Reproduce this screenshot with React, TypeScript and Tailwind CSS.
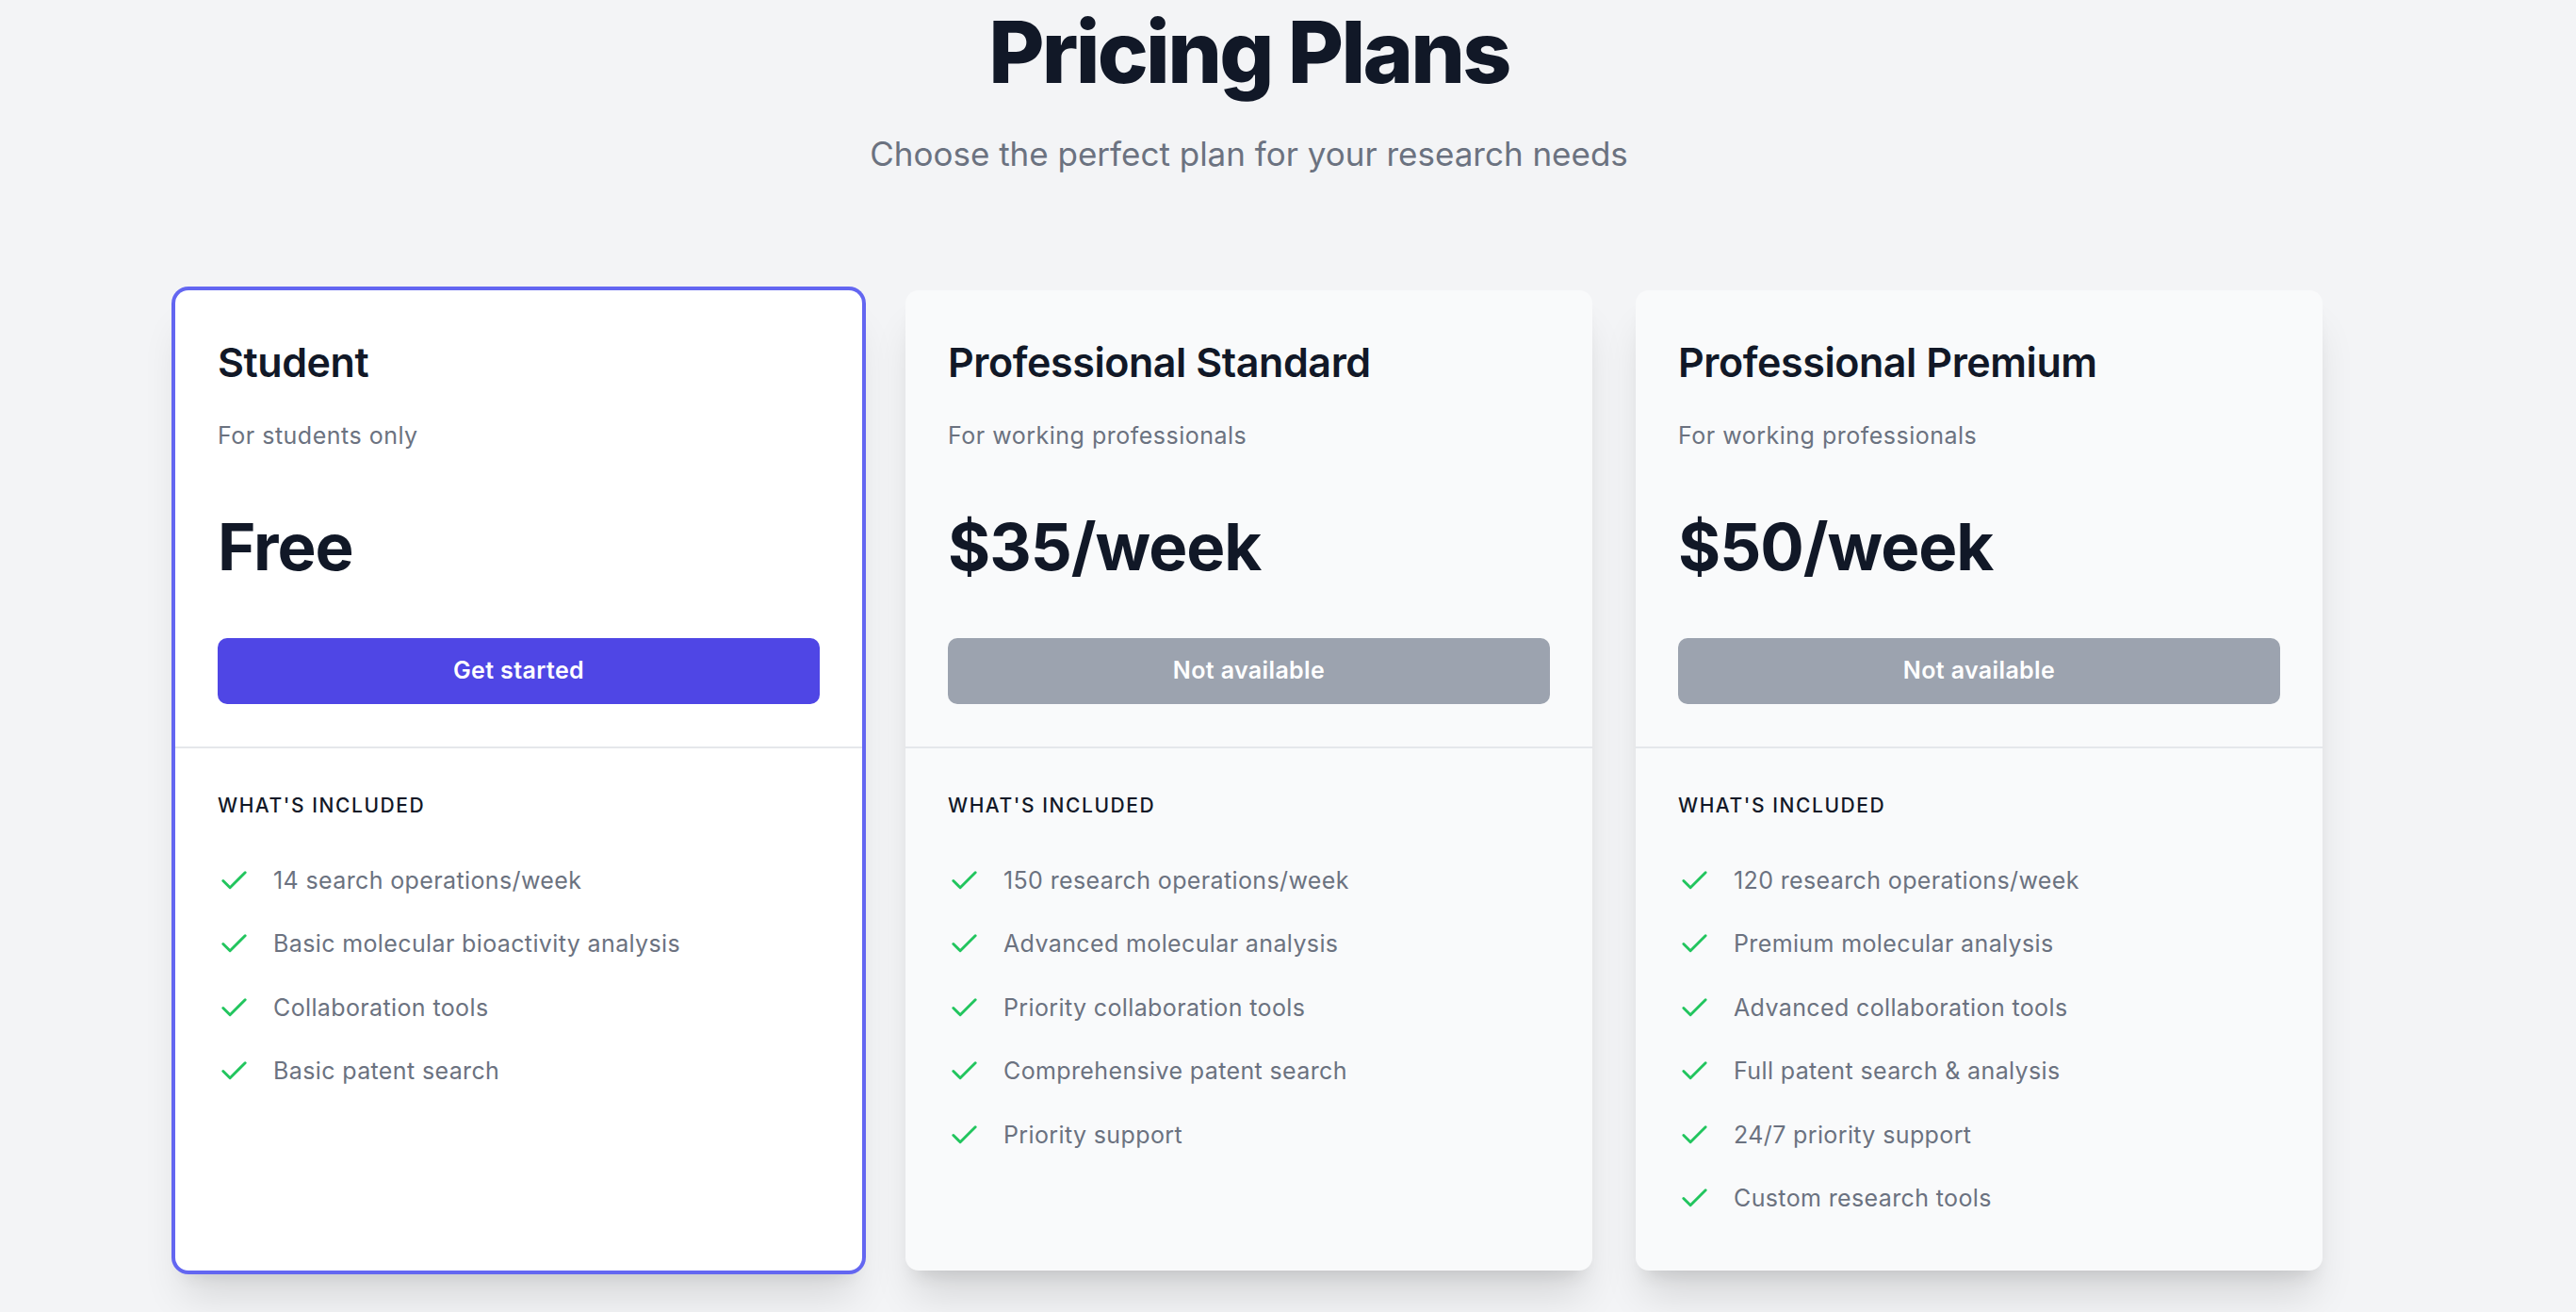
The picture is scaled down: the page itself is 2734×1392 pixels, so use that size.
import React from "react";
import { Check } from "lucide-react";

type Plan = {
  name: string;
  desc: string;
  price: string;
  cta: string;
  active: boolean;
  features: string[];
};

const plans: Plan[] = [
  {
    name: "Student",
    desc: "For students only",
    price: "Free",
    cta: "Get started",
    active: true,
    features: [
      "14 search operations/week",
      "Basic molecular bioactivity analysis",
      "Collaboration tools",
      "Basic patent search",
    ],
  },
  {
    name: "Professional Standard",
    desc: "For working professionals",
    price: "$35/week",
    cta: "Not available",
    active: false,
    features: [
      "150 research operations/week",
      "Advanced molecular analysis",
      "Priority collaboration tools",
      "Comprehensive patent search",
      "Priority support",
    ],
  },
  {
    name: "Professional Premium",
    desc: "For working professionals",
    price: "$50/week",
    cta: "Not available",
    active: false,
    features: [
      "120 research operations/week",
      "Premium molecular analysis",
      "Advanced collaboration tools",
      "Full patent search & analysis",
      "24/7 priority support",
      "Custom research tools",
    ],
  },
];

function Card({ plan }: { plan: Plan }) {
  return (
    <div
      className={
        plan.active
          ? "flex-1 flex flex-col rounded-[14px] bg-white ring-4 ring-[#6366f1] shadow-[0_35px_44px_-9px_rgba(0,0,0,0.12),0_14px_18px_-10px_rgba(0,0,0,0.1)]"
          : "flex-1 flex flex-col rounded-[14px] bg-[#f9fafb] shadow-[0_35px_44px_-9px_rgba(0,0,0,0.12),0_14px_18px_-10px_rgba(0,0,0,0.1)]"
      }
    >
      <div className="px-[45px] pt-[55px] pb-[45px]">
        <h3 className="text-[43px] leading-none font-semibold text-[#111827] tracking-[-0.01em]">{plan.name}</h3>
        <p className="mt-[44px] text-[25px] leading-none tracking-[0.02em] text-[#6b7280]">{plan.desc}</p>
        <p className="mt-[71px] text-[69px] leading-none font-bold text-[#111827] tracking-[-0.015em]">{plan.price}</p>
        <button
          className={
            plan.active
              ? "mt-[62px] h-[70px] w-full rounded-[10px] bg-[#4f46e5] text-[25px] font-semibold tracking-[0.015em] text-white"
              : "mt-[62px] h-[70px] w-full rounded-[10px] bg-[#9ca3af] text-[25px] font-semibold tracking-[0.015em] text-white"
          }
        >
          {plan.cta}
        </button>
      </div>
      <div className="flex-1 border-t-2 border-[#e5e7eb] px-[45px] pt-[50px] pb-[59px]">
        <h4 className="text-[21px] leading-none font-medium uppercase tracking-[0.075em] text-[#111827]">
          What's included
        </h4>
        <ul className="mt-[51.5px] flex flex-col gap-[32.6px]">
          {plan.features.map((f) => (
            <li key={f} className="flex items-center gap-[24px]">
              <Check size={35} strokeWidth={2} className="shrink-0 text-[#22c55e]" />
              <span className="text-[25px] leading-none tracking-[0.015em] text-[#6b7280]">{f}</span>
            </li>
          ))}
        </ul>
      </div>
    </div>
  );
}

export default function App() {
  return (
    <div className="min-h-screen bg-[#f3f4f6] font-['Inter','Noto_Sans',sans-serif] pt-[10px] pl-[186px]">
      <div className="w-[2279px]">
        <div className="text-center">
          <h1 className="text-[91px] leading-none font-extrabold text-[#111827] tracking-[-0.03em]">Pricing Plans</h1>
          <p className="mt-[45px] text-[35px] leading-none text-[#6b7280]">
            Choose the perfect plan for your research needs
          </p>
        </div>
        <div className="mt-[127px] flex items-stretch gap-[46px]">
          {plans.map((p) => (
            <Card key={p.name} plan={p} />
          ))}
        </div>
      </div>
    </div>
  );
}
